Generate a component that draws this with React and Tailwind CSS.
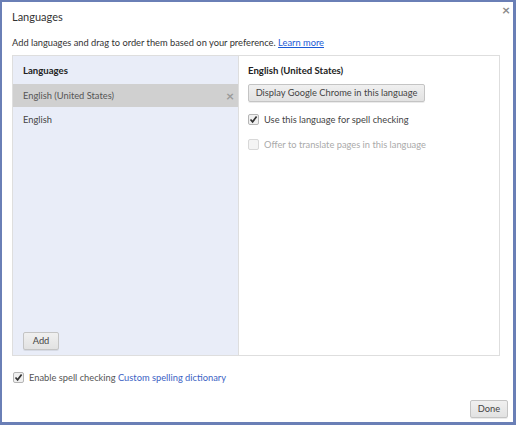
import React from "react";

const font = { fontFamily: 'Lato, "Noto Sans", sans-serif' };

const Check = ({ checked, disabled }) => (
  <span
    className={`inline-flex h-[11px] w-[11px] shrink-0 items-center justify-center rounded-[2px] border ${
      disabled ? "border-[#d8d8d8] bg-[#f4f4f4]" : "border-[#b5b5b5] bg-[#f0f0f0]"
    }`}
  >
    {checked && (
      <svg width="9" height="9" viewBox="0 0 9 9">
        <path d="M1.5 4.5 L3.6 6.8 L7.6 1.5" fill="none" stroke="#333" strokeWidth="1.7" />
      </svg>
    )}
  </span>
);

const Btn = ({ children, className = "" }) => (
  <button
    className={`whitespace-nowrap rounded-[2px] border border-[#c4c4c4] bg-gradient-to-b from-[#f0f0f0] to-[#e2e2e2] text-[9.3px] leading-none text-[#444] shadow-[0_1px_0_rgba(0,0,0,0.08)] ${className}`}
  >
    {children}
  </button>
);

export default function App() {
  return (
    <div
      className="relative flex h-[425px] w-[516px] flex-col border-b-[3px] border-l-2 border-r-[3px] border-t-2 border-[#6a7fb6] bg-white text-[#333]"
      style={font}
    >
      <span className="absolute right-[3px] top-[1px] text-[14px] font-bold leading-none text-[#8a8a8a]">
        ×
      </span>
      <div className="pl-[10px] pt-[6px] text-[11px] leading-[18px] text-[#333]">Languages</div>
      <div className="pl-[10px] pt-[9px] text-[9.3px] leading-[16px] text-[#333]">
        Add languages and drag to order them based on your preference.{" "}
        <span className="text-[#1a5ad6] underline">Learn more</span>
      </div>
      <div className="ml-[10px] mt-[4px] flex h-[301px] w-[488px] border border-[#dedede]">
        <div className="flex w-[226px] flex-col border-r border-[#dedede] bg-[#e9edf8]">
          <div className="pl-[10px] pt-[7px] text-[9.6px] font-bold leading-[15px] text-[#222]">Languages</div>
          <div className="mt-[6px] flex h-[23px] items-center justify-between bg-[#d0d0d0] pl-[10px] pr-[4px] text-[9.3px] text-[#555]">
            <span>English (United States)</span>
            <span className="text-[14px] font-bold leading-none text-[#9a9a9a]">×</span>
          </div>
          <div className="flex h-[25px] items-center pl-[10px] text-[9.3px] text-[#444]">English</div>
          <div className="flex-1" />
          <Btn className="mb-[5px] ml-[10px] h-[18px] w-[36px]">Add</Btn>
        </div>
        <div className="flex flex-1 flex-col pl-[9px]">
          <div className="pt-[7px] text-[9.6px] font-bold leading-[15px] text-[#222]">English (United States)</div>
          <Btn className="mt-[6px] h-[18px] w-[177px]">Display Google Chrome in this language</Btn>
          <div className="mt-[10px] flex items-center gap-[5px] text-[9.3px] leading-[15px] text-[#444]">
            <Check checked />
            <span>Use this language for spell checking</span>
          </div>
          <div className="mt-[10px] flex items-center gap-[5px] text-[9.3px] leading-[15px] text-[#aaa]">
            <Check disabled />
            <span>Offer to translate pages in this language</span>
          </div>
        </div>
      </div>
      <div className="ml-[11px] mt-[14px] flex items-center gap-[5px] text-[9.3px] leading-[15px] text-[#555]">
        <Check checked />
        <span>
          Enable spell checking <span className="text-[#3b62c4]">Custom spelling dictionary</span>
        </span>
      </div>
      <div className="flex-1" />
      <div className="flex justify-end pb-[4px] pr-[5px]">
        <Btn className="h-[18px] w-[38px]">Done</Btn>
      </div>
    </div>
  );
}
